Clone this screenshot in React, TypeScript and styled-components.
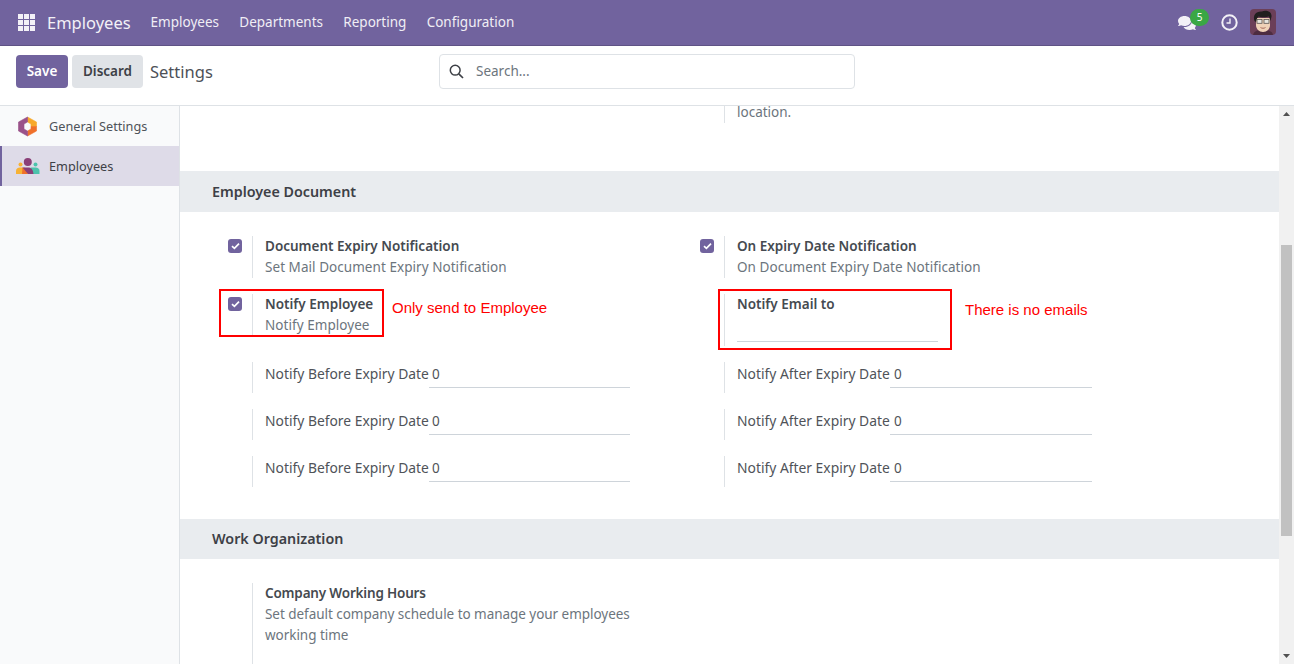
import React from 'react'
import styled, { createGlobalStyle } from 'styled-components'
import { FaComments } from 'react-icons/fa'

const GlobalStyle = createGlobalStyle`
  html, body {
    margin: 0;
    padding: 0;
    height: 100%;
    overflow: hidden;
    background: #fff;
  }
  body {
    font-family: "Noto Sans", "Open Sans", sans-serif;
    font-size: 13.5px;
    color: #4c4c4c;
  }
  * { box-sizing: border-box; }
`

const Page = styled.div`
  display: flex;
  flex-direction: column;
  width: 1294px;
  height: 664px;
  overflow: hidden;
`

const NavBar = styled.header`
  display: flex;
  align-items: center;
  flex: 0 0 46px;
  padding: 0 18px 1px 18px;
  background: #71639e;
  border-bottom: 1px solid #5f5385;
  color: #fff;
`

const AppsIcon = styled.svg`
  width: 17px;
  height: 17px;
  margin-right: 12px;
`

const Brand = styled.span`
  font-size: 16.5px;
  color: #f3f1f7;
  margin-right: 20px;
`

const NavLink = styled.span`
  font-size: 13.5px;
  color: #f0eef5;
  margin-right: 20.3px;
`

const NavRight = styled.div`
  margin-left: auto;
  display: flex;
  align-items: center;
`

const ChatWrap = styled.div`
  position: relative;
  display: flex;
  width: 20px;
  height: 20px;
  align-items: center;
  margin-right: 24px;
  margin-left: -1px;
  color: #f3f1f7;
  font-size: 18px;
  top: 1px;
`

const Badge = styled.span`
  position: absolute;
  left: 12px;
  top: -4px;
  width: 19px;
  height: 17px;
  border-radius: 9px;
  background: #3aa745;
  color: #fff;
  font-size: 10px;
  line-height: 16px;
  text-align: center;
`

const ClockIcon = styled.svg`
  display: block;
  width: 17px;
  height: 17px;
  margin: 0 12px 0 -1px;
`

const Avatar = styled.svg`
  width: 26px;
  height: 26px;
  border-radius: 4px;
  display: block;
`

const ControlPanel = styled.div`
  display: flex;
  align-items: flex-start;
  flex: 0 0 60px;
  padding: 9px 16px 0;
  background: #fff;
  border-bottom: 1px solid #dee2e6;
`

const Button = styled.button<{ $primary?: boolean }>`
  height: 33px;
  padding: 0 0 2px;
  width: ${(p) => (p.$primary ? '52px' : '71px')};
  margin-right: ${(p) => (p.$primary ? '4px' : '7px')};
  border: 0;
  border-radius: 4px;
  font-family: inherit;
  font-size: 13.5px;
  font-weight: 600;
  background: ${(p) => (p.$primary ? '#71639e' : '#e0e3e7')};
  color: ${(p) => (p.$primary ? '#fff' : '#3d4046')};
`

const PageTitle = styled.span`
  flex: 0 0 64px;
  font-size: 16.5px;
  line-height: 34px;
  color: #4d5157;
`

const SearchBox = styled.div`
  display: flex;
  align-items: center;
  width: 416px;
  height: 35px;
  margin: -1px 0 0 225px;
  padding: 0 0 2px 9px;
  border: 1px solid #dee2e6;
  border-radius: 4px;
  color: #6c757d;
`

const SearchIcon = styled.svg`
  width: 15px;
  height: 15px;
  margin: 2px 12px 0 0;
`

const Body = styled.div`
  display: flex;
  flex: 1;
  min-height: 0;
`

const Sidebar = styled.nav`
  flex: 0 0 180px;
  background: #f9fafb;
  border-right: 1px solid #dee2e6;
`

const SideItem = styled.div<{ $active?: boolean }>`
  display: flex;
  align-items: center;
  height: 40px;
  padding-left: ${(p) => (p.$active ? '14px' : '16px')};
  border-left: ${(p) => (p.$active ? '2px solid #71639e' : '0')};
  background: ${(p) => (p.$active ? '#dedbe8' : 'transparent')};
  color: ${(p) => (p.$active ? '#3d4046' : '#4f5359')};
  font-size: 12.7px;
`

const SideIcon = styled.svg`
  width: 24px;
  height: 24px;
  margin-right: 9px;
  flex: none;
`

const Content = styled.main`
  flex: 1;
  min-width: 0;
`

const ClippedRow = styled.div`
  height: 65px;
  padding-left: 544px;
`

const ClippedText = styled.div`
  width: 200px;
  height: 17px;
  padding-left: 12px;
  border-left: 1px solid #dee2e6;
  color: #6c757d;
  line-height: 13px;
`

const SectionHeader = styled.h2<{ $height: number }>`
  display: flex;
  align-items: center;
  height: ${(p) => p.$height}px;
  margin: 0;
  padding: 0 0 1px 32px;
  background: #e9ecef;
  font-size: 14.3px;
  font-weight: 600;
  color: #3d4046;
`

const SettingsGrid = styled.div<{ $bottom: number }>`
  display: grid;
  grid-template-columns: 472px 472px;
  row-gap: 16px;
  align-items: start;
  padding: 24px 0 ${(p) => p.$bottom}px 32px;
`

const Setting = styled.div`
  position: relative;
  display: flex;
`

const LeftPane = styled.div`
  flex: 0 0 40px;
  padding: 3px 0 0 16px;
`

const Checkbox = styled.span`
  display: flex;
  align-items: center;
  justify-content: center;
  width: 14px;
  height: 14px;
  border-radius: 3px;
  background: #71639e;
`

const RightPane = styled.div<{ $height?: number }>`
  display: flex;
  flex-direction: column;
  width: 395px;
  min-height: ${(p) => p.$height ?? 42}px;
  padding-left: 12px;
  border-left: 1px solid #dee2e6;
`

const Title = styled.div<{ $spacing?: number }>`
  font-size: 13.5px;
  letter-spacing: ${(p) => p.$spacing ?? 0}px;
  line-height: 21px;
  font-weight: 600;
  color: #454a50;
  white-space: nowrap;
`

const Muted = styled.div<{ $spacing?: number }>`
  font-size: 13.5px;
  letter-spacing: ${(p) => p.$spacing ?? 0.05}px;
  line-height: 21px;
  color: #6c757d;
  white-space: nowrap;
`

const FieldRow = styled.div`
  display: flex;
  align-items: flex-start;
  height: 26px;
  padding-top: 2px;
  white-space: nowrap;
  color: #4f5359;
`

const FieldLabel = styled.span<{ $width: number }>`
  flex: 0 0 ${(p) => p.$width}px;
  font-size: 13.85px;
  line-height: 20px;
`

const FieldInput = styled.span<{ $right?: boolean }>`
  width: ${(p) => (p.$right ? '202px' : '201px')};
  height: 24px;
  padding-left: ${(p) => (p.$right ? '4px' : '3px')};
  line-height: 20px;
  border-bottom: 1px solid #ced4da;
`

const EmailInput = styled.div`
  width: 201px;
  height: 27px;
  border-bottom: 1px solid #ced4da;
`

const RedBox = styled.div<{ $left: number; $width: number; $height: number }>`
  position: absolute;
  left: ${(p) => p.$left}px;
  top: -5px;
  width: ${(p) => p.$width}px;
  height: ${(p) => p.$height}px;
  border: 2px solid #f00;
`

const RedNote = styled.span<{ $left: number; $top: number }>`
  position: absolute;
  left: ${(p) => p.$left}px;
  top: ${(p) => p.$top}px;
  font-family: "Liberation Sans", Arial, sans-serif;
  font-size: 15px;
  line-height: 18px;
  color: #f00;
  white-space: nowrap;
`

const Scrollbar = styled.div`
  position: relative;
  flex: 0 0 15px;
  background: #f1f1f1;
`

const ScrollThumb = styled.div`
  width: 11px;
  height: 291px;
  margin: 139px 0 0 2px;
  background: #c1c1c1;
`

const ScrollArrow = styled.svg<{ $down?: boolean }>`
  position: absolute;
  left: 4px;
  width: 7px;
  height: 4px;
  ${(p) => (p.$down ? 'bottom: 6px;' : 'top: 6px;')}
`

const Check = () => (
  <svg width="9" height="8" viewBox="0 0 9 8">
    <path d="M1 4.2 3.4 6.4 8 1.6" fill="none" stroke="#fff" strokeWidth="1.7" />
  </svg>
)

const InputSetting = ({ label, width, right }: { label: string; width: number; right?: boolean }) => (
  <Setting>
    <LeftPane />
    <RightPane $height={31}>
      <FieldRow>
        <FieldLabel $width={width}>{label}</FieldLabel>
        <FieldInput $right={right}>0</FieldInput>
      </FieldRow>
    </RightPane>
  </Setting>
)

const navLinks = ['Employees', 'Departments', 'Reporting', 'Configuration']
const appCells = [0, 6, 12]

const App = () => (
  <Page>
    <GlobalStyle />
    <NavBar>
      <AppsIcon viewBox="0 0 17 17">
        {appCells.map((y) =>
          appCells.map((x) => <rect key={`${x}-${y}`} x={x} y={y} width="5" height="5" fill="#f3f1f7" />)
        )}
      </AppsIcon>
      <Brand>Employees</Brand>
      {navLinks.map((item) => (
        <NavLink key={item}>{item}</NavLink>
      ))}
      <NavRight>
        <ChatWrap>
          <FaComments />
          <Badge>5</Badge>
        </ChatWrap>
        <ClockIcon viewBox="0 0 17 17">
          <circle cx="8.5" cy="8.5" r="7.2" fill="none" stroke="#f3f1f7" strokeWidth="2" />
          <path d="M9 4.500v4.500H5.500" fill="none" stroke="#f3f1f7" strokeWidth="1.400" />
        </ClockIcon>
        <Avatar viewBox="0 0 26 26">
          <rect width="26" height="26" fill="#6b3f58" />
          <path d="M3 26c1-4 4-5 10-5s9 1 10 5z" fill="#4d2c40" />
          <path d="M6 9h14v7c0 4-3 7-7 7s-7-3-7-7z" fill="#f0d2b8" />
          <path d="M4.500 12C2.500 6 6 2 12 2.500c3-1.500 10-.5 9.500 5L20.500 12l-1.500-4.500c-3 1-8 1-10.500 0L7 9.500 6 13z" fill="#211f1f" />
          <rect x="7" y="10.500" width="5" height="3.800" fill="#e8e6df" stroke="#5a5552" strokeWidth=".8" />
          <rect x="14" y="10.500" width="5" height="3.800" fill="#e8e6df" stroke="#5a5552" strokeWidth=".8" />
          <path d="M10.500 18.500c1.500 1 3.500 1 5 0" fill="none" stroke="#a86a5a" />
        </Avatar>
      </NavRight>
    </NavBar>

    <ControlPanel>
      <Button $primary>Save</Button>
      <Button>Discard</Button>
      <PageTitle>Settings</PageTitle>
      <SearchBox>
        <SearchIcon viewBox="0 0 15 15">
          <circle cx="6.2" cy="6.2" r="4.9" fill="none" stroke="#3d4046" strokeWidth="1.5" />
          <path d="M9.800 9.800 14 14" stroke="#3d4046" strokeWidth="1.7" />
        </SearchIcon>
        Search...
      </SearchBox>
    </ControlPanel>

    <Body>
      <Sidebar>
        <SideItem>
          <SideIcon viewBox="0 0 24 24">
            <path d="M11.500 3 20.500 8v4.500h-5.500v-2.500L11.500 8z" fill="#f7a92b" stroke="#f7a92b" strokeLinejoin="round" strokeWidth=".6" />
            <path d="M20.500 12.500V17l-9 5v-5l3.500-2v-2.500z" fill="#f0702a" stroke="#f0702a" strokeLinejoin="round" strokeWidth=".6" />
            <path d="M11.500 22 2.500 17V8l9-5v5L8 10v5l3.500 2z" fill="#9a5289" stroke="#9a5289" strokeLinejoin="round" strokeWidth=".6" />
          </SideIcon>
          General Settings
        </SideItem>
        <SideItem $active>
          <SideIcon viewBox="0 0 24 24">
            <circle cx="4.500" cy="10.500" r="2" fill="#f7b235" />
            <circle cx="19.500" cy="10.500" r="2" fill="#4cc3ac" />
            <path d="M0 20v-3c0-2 1.500-3.500 4-3.500h5V20z" fill="#f7b235" />
            <path d="M23.500 20v-3c0-2-1.500-3.500-4-3.500h-5V20z" fill="#4cc3ac" />
            <circle cx="11.800" cy="8" r="4" fill="#8a3f77" />
            <path d="M6.500 13.500h6c2.500 0 4.500 2 5 6.500h-5.500c-2 0-4-2.500-5.500-6.500z" fill="#8a3f77" />
            <path d="M6.500 13.500 12 20H6z" fill="#f0702a" />
          </SideIcon>
          Employees
        </SideItem>
      </Sidebar>

      <Content>
        <ClippedRow>
          <ClippedText>location.</ClippedText>
        </ClippedRow>
        <SectionHeader $height={41}>Employee Document</SectionHeader>
        <SettingsGrid $bottom={32}>
          <Setting>
            <LeftPane>
              <Checkbox>
                <Check />
              </Checkbox>
            </LeftPane>
            <RightPane>
              <Title>Document Expiry Notification</Title>
              <Muted>Set Mail Document Expiry Notification</Muted>
            </RightPane>
          </Setting>
          <Setting>
            <LeftPane>
              <Checkbox>
                <Check />
              </Checkbox>
            </LeftPane>
            <RightPane>
              <Title>On Expiry Date Notification</Title>
              <Muted>On Document Expiry Date Notification</Muted>
            </RightPane>
          </Setting>

          <Setting>
            <LeftPane>
              <Checkbox>
                <Check />
              </Checkbox>
            </LeftPane>
            <RightPane>
              <Title>Notify Employee</Title>
              <Muted>Notify Employee</Muted>
            </RightPane>
            <RedBox $left={7} $width={165} $height={48} />
            <RedNote $left={180} $top={5}>Only send to Employee</RedNote>
          </Setting>
          <Setting>
            <LeftPane />
            <RightPane $height={52}>
              <Title>Notify Email to</Title>
              <EmailInput />
            </RightPane>
            <RedBox $left={34} $width={234} $height={61} />
            <RedNote $left={281} $top={7}>There is no emails</RedNote>
          </Setting>

          <InputSetting label="Notify Before Expiry Date" width={164} />
          <InputSetting label="Notify After Expiry Date" width={153} right />
          <InputSetting label="Notify Before Expiry Date" width={164} />
          <InputSetting label="Notify After Expiry Date" width={153} right />
          <InputSetting label="Notify Before Expiry Date" width={164} />
          <InputSetting label="Notify After Expiry Date" width={153} right />
        </SettingsGrid>

        <SectionHeader $height={40}>Work Organization</SectionHeader>
        <SettingsGrid $bottom={0}>
          <Setting>
            <LeftPane />
            <RightPane $height={90}>
              <Title $spacing={-0.18}>Company Working Hours</Title>
              <Muted $spacing={-0.04}>
                Set default company schedule to manage your employees
                <br />
                working time
              </Muted>
            </RightPane>
          </Setting>
        </SettingsGrid>
      </Content>

      <Scrollbar>
        <ScrollArrow viewBox="0 0 7 4">
          <path d="M3.500 0 7 4H0z" fill="#505050" />
        </ScrollArrow>
        <ScrollThumb />
        <ScrollArrow $down viewBox="0 0 7 4">
          <path d="M0 0h7L3.500 4z" fill="#505050" />
        </ScrollArrow>
      </Scrollbar>
    </Body>
  </Page>
)

export default App
